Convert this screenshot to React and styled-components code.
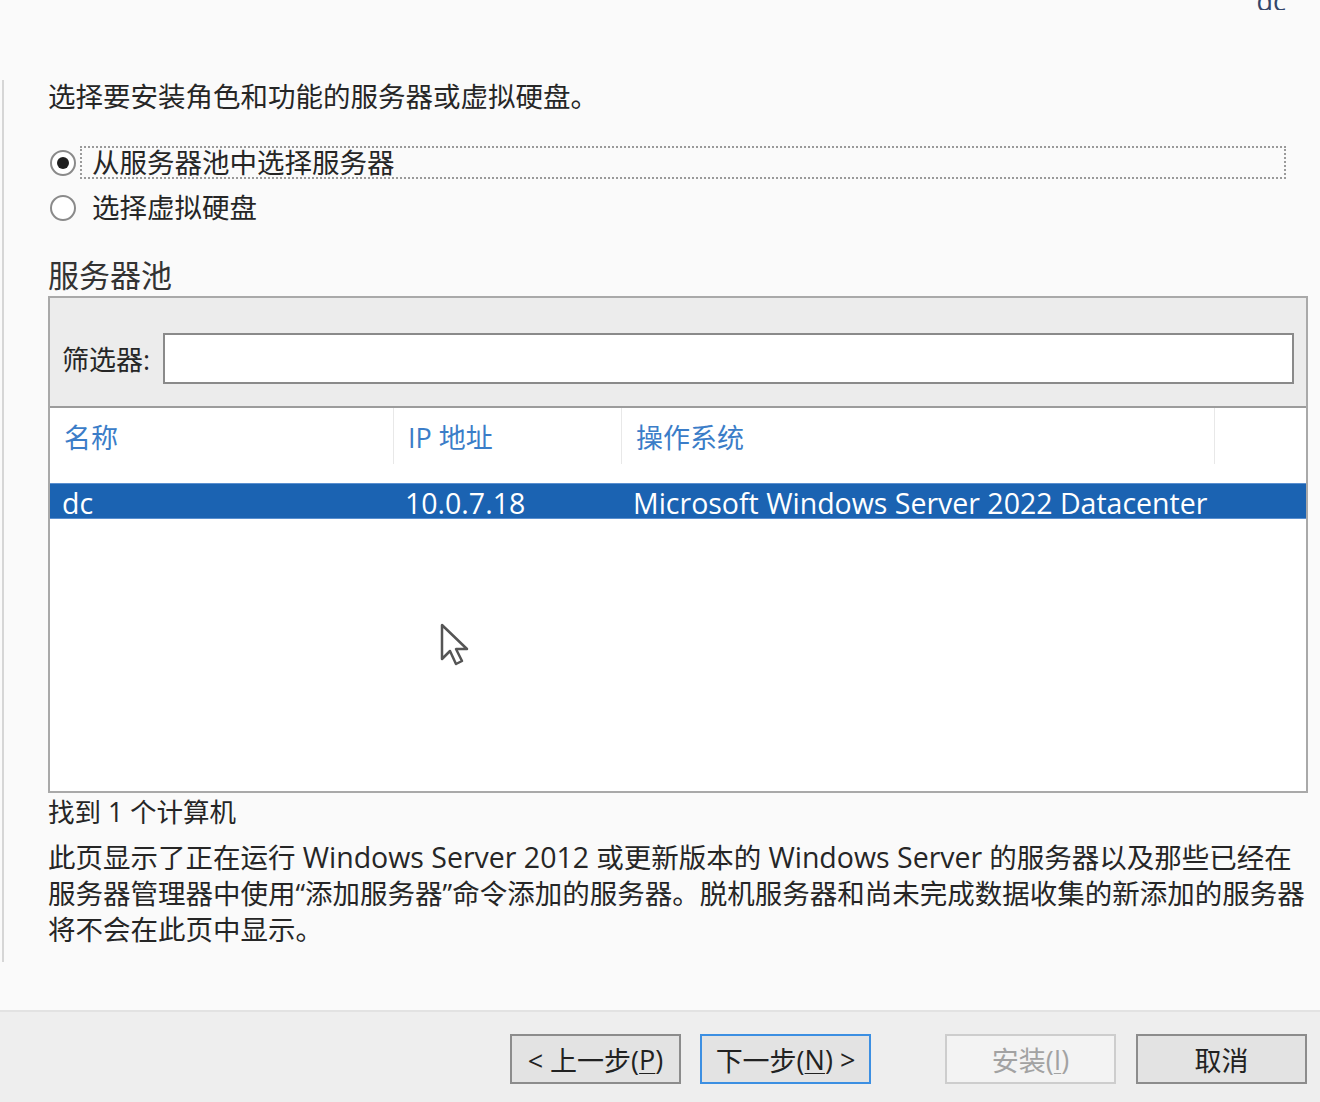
import styled, { createGlobalStyle } from "styled-components";

const GlobalStyle = createGlobalStyle`
    html, body {
        margin: 0;
        padding: 0;
        background: #fafafa;
    }
    body {
        font-family: "Open Sans", "Noto Sans CJK SC", sans-serif;
        color: #262626;
    }
`;

const Page = styled.div`
    width: 1320px;
    height: 1102px;
    display: flex;
    flex-direction: column;
    background: #fafafa;
    overflow: hidden;
`;

const TopBar = styled.div`
    height: 10px;
    display: flex;
    justify-content: flex-end;
    align-items: flex-end;
    padding-right: 34px;
    overflow: hidden;
`;

const ServerName = styled.span`
    font-size: 27px;
    line-height: 27px;
    margin-bottom: -4px;
    color: #34466a;
`;

const Main = styled.div`
    flex: 1;
    padding-top: 70px;
`;

const Body = styled.div`
    margin-left: 2px;
    height: 882px;
    border-left: 2px solid #d6d6d6;
    padding: 0 12px 0 44px;
    display: flex;
    flex-direction: column;
`;

const Intro = styled.div`
    font-size: 27.5px;
    line-height: 34px;
`;

const RadioGroup = styled.div`
    margin-top: 26px;
    display: flex;
    flex-direction: column;
`;

const RadioRow = styled.div`
    height: 45px;
    display: flex;
    align-items: center;
`;

const RadioDot = styled.span`
    width: 22px;
    height: 22px;
    margin-left: 2px;
    border-radius: 50%;
    border: 2px solid #8a8a8a;
    background: #fff;
    display: flex;
    align-items: center;
    justify-content: center;
    flex-shrink: 0;
    &::after {
        content: "";
        width: 12px;
        height: 12px;
        border-radius: 50%;
        background: ${(p) => (p.checked ? "#1f1f1f" : "transparent")};
    }
`;

const RadioLabel = styled.span`
    margin-left: 4px;
    padding-left: 10px;
    font-size: 27.5px;
    line-height: 29px;
    flex: ${(p) => (p.focused ? 1 : "none")};
    margin-right: ${(p) => (p.focused ? "22px" : 0)};
    border: 2px dotted ${(p) => (p.focused ? "#9a9a9a" : "transparent")};
`;

const PoolTitle = styled.div`
    margin-top: 25px;
    font-size: 31px;
    line-height: 40px;
    color: #333;
`;

const PoolBox = styled.div`
    margin-top: 1px;
    height: 493px;
    border: 2px solid #a9a9a9;
    display: flex;
    flex-direction: column;
    background: #fff;
    position: relative;
`;

const FilterBar = styled.div`
    background: #ececec;
    border-bottom: 2px solid #9c9c9c;
    padding: 35px 12px 22px 12px;
    display: flex;
    align-items: center;
    gap: 12px;
`;

const FilterLabel = styled.span`
    font-size: 27px;
    width: 89px;
    white-space: nowrap;
`;

const FilterInput = styled.div`
    flex: 1;
    height: 47px;
    background: #fff;
    border: 2px solid #8a8a8a;
`;

const TableGrid = styled.div`
    display: grid;
    grid-template-columns: 343px 228px 593px 1fr;
`;

const HeadCell = styled.div`
    height: 56px;
    display: flex;
    align-items: center;
    padding-left: 14px;
    font-size: 27px;
    color: #3b7dc8;
    border-left: ${(p) => (p.first ? "none" : "1px solid #e8e8e8")};
`;

const RowGrid = styled(TableGrid)`
    margin-top: 19px;
    height: 34px;
    background: #1b63b2;
    border-top: 1px solid #5a8fcf;
    border-bottom: 1px solid #5a8fcf;
`;

const Cell = styled.div`
    display: flex;
    align-items: center;
    padding-left: 12px;
    font-size: 28.5px;
    color: #fff;
    white-space: nowrap;
`;

const Cursor = styled.svg`
    position: absolute;
    left: 390px;
    top: 325px;
`;

const FoundText = styled.div`
    margin-top: 2px;
    font-size: 26.5px;
    line-height: 34px;
`;

const Note = styled.p`
    margin: 10px 0 0;
    font-size: 27.5px;
    line-height: 36px;
    white-space: nowrap;
`;

const Latin = styled.span`
    font-size: 28.5px;
`;

const Footer = styled.div`
    height: 92px;
    box-sizing: border-box;
    background: #eeeeee;
    border-top: 2px solid #e2e2e2;
    display: flex;
    justify-content: flex-end;
    align-items: flex-start;
    padding: 22px 13px 0 0;
`;

const Button = styled.div`
    width: 167px;
    height: 46px;
    margin-left: ${(p) => p.gap || 19}px;
    border: 2px solid ${(p) => (p.primary ? "#3c8fe2" : p.disabled ? "#cdcdcd" : "#8c8c8c")};
    background: ${(p) => (p.disabled ? "#f3f3f3" : "#e3e3e3")};
    color: ${(p) => (p.disabled ? "#a2a2a2" : "#222")};
    font-size: 27px;
    display: flex;
    align-items: center;
    justify-content: center;
    white-space: nowrap;
    u {
        text-decoration-thickness: 1px;
        text-underline-offset: 3px;
    }
`;

const columns = ["名称", "IP 地址", "操作系统", ""];
const row = ["dc", "10.0.7.18", "Microsoft Windows Server 2022 Datacenter", ""];

function App() {
    return (
        <Page>
            <GlobalStyle />
            <TopBar>
                <ServerName>dc</ServerName>
            </TopBar>
            <Main>
                <Body>
                    <Intro>选择要安装角色和功能的服务器或虚拟硬盘。</Intro>
                    <RadioGroup>
                        <RadioRow>
                            <RadioDot checked />
                            <RadioLabel focused>从服务器池中选择服务器</RadioLabel>
                        </RadioRow>
                        <RadioRow>
                            <RadioDot />
                            <RadioLabel>选择虚拟硬盘</RadioLabel>
                        </RadioRow>
                    </RadioGroup>
                    <PoolTitle>服务器池</PoolTitle>
                    <PoolBox>
                        <FilterBar>
                            <FilterLabel>筛选器:</FilterLabel>
                            <FilterInput />
                        </FilterBar>
                        <TableGrid>
                            {columns.map((c, i) => (
                                <HeadCell key={i} first={i === 0}>
                                    {c}
                                </HeadCell>
                            ))}
                        </TableGrid>
                        <RowGrid>
                            {row.map((c, i) => (
                                <Cell key={i}>{c}</Cell>
                            ))}
                        </RowGrid>
                        <Cursor width="32" height="48" viewBox="0 0 32 48">
                            <path
                                d="M2 2 L2 36 L10 28 L16 41 L22 38 L16 26 L27 26 Z"
                                fill="#fff"
                                stroke="#555"
                                strokeWidth="2.5"
                                strokeLinejoin="round"
                            />
                        </Cursor>
                    </PoolBox>
                    <FoundText>找到 1 个计算机</FoundText>
                    <Note>
                        此页显示了正在运行 <Latin>Windows Server 2012</Latin> 或更新版本的{" "}
                        <Latin>Windows Server</Latin> 的服务器以及那些已经在
                        <br />
                        服务器管理器中使用“添加服务器”命令添加的服务器。脱机服务器和尚未完成数据收集的新添加的服务器
                        <br />
                        将不会在此页中显示。
                    </Note>
                </Body>
            </Main>
            <Footer>
                <Button>
                    &lt; 上一步(<u>P</u>)
                </Button>
                <Button primary>
                    下一步(<u>N</u>) &gt;
                </Button>
                <Button disabled gap={74}>
                    安装(<u>I</u>)
                </Button>
                <Button gap={20}>取消</Button>
            </Footer>
        </Page>
    );
}

export default App;
